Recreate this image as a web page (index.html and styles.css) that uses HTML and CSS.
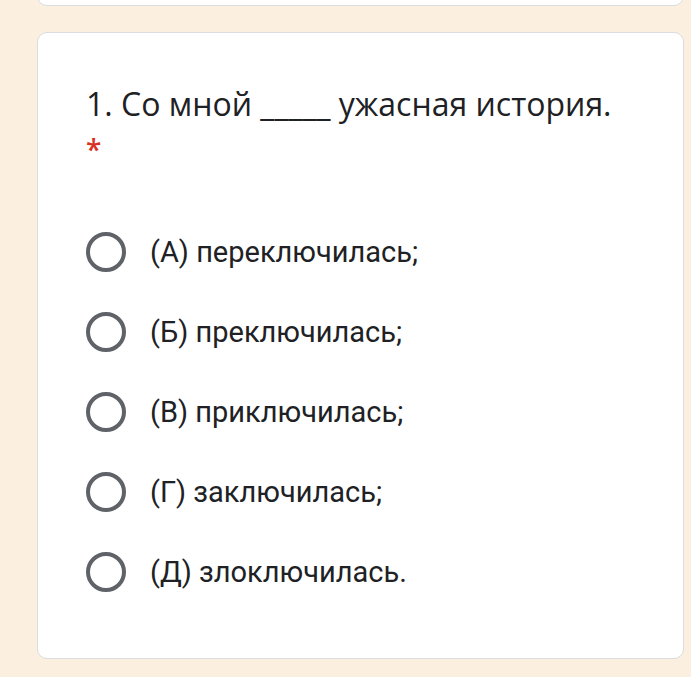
FILE: index.html
```html
<!DOCTYPE html>
<html lang="ru">
<head>
<meta charset="utf-8">
<link rel="stylesheet" href="styles.css">
</head>
<body>
<div class="page">
  <div class="card card-prev"></div>
  <div class="card question">
    <div class="title">1. Со мной _____ ужасная история. <span class="req">*</span></div>
    <div class="options">
      <div class="option"><span class="radio"></span><span class="label">(А) переключилась;</span></div>
      <div class="option"><span class="radio"></span><span class="label">(Б) преключилась;</span></div>
      <div class="option"><span class="radio"></span><span class="label">(В) приключилась;</span></div>
      <div class="option"><span class="radio"></span><span class="label">(Г) заключилась;</span></div>
      <div class="option"><span class="radio"></span><span class="label">(Д) злоключилась.</span></div>
    </div>
  </div>
</div>
</body>
</html>
```
FILE: styles.css
```css
html, body {
  margin: 0;
  padding: 0;
  background: #fbf0df;
}
.page {
  width: 691px;
  height: 677px;
  overflow: hidden;
  padding: 0 7px 0 37px;
  box-sizing: border-box;
}
.card {
  background: #fff;
  border: 1px solid #dadce0;
  border-radius: 10px;
  box-sizing: border-box;
}
.card-prev {
  height: 40px;
  margin-top: -34px;
}
.question {
  margin-top: 26px;
  height: 627px;
  padding: 49px 40px 0 48px;
}
.title {
  font-family: "Open Sans", "Noto Sans", sans-serif;
  font-size: 32px;
  line-height: 44px;
  color: #202124;
  width: 545px;
}
.req {
  color: #d93025;
  font-size: 28px;
  font-weight: 600;
}
.options {
  margin-top: 61px;
  display: flex;
  flex-direction: column;
  gap: 40px;
}
.option {
  display: flex;
  align-items: center;
  height: 40px;
  gap: 24px;
}
.radio {
  width: 40px;
  height: 40px;
  border: 4px solid #5f6368;
  border-radius: 50%;
  box-sizing: border-box;
  flex: none;
}
.label {
  font-family: Roboto, "Liberation Sans", sans-serif;
  font-size: 29px;
  color: #202124;
}
```
